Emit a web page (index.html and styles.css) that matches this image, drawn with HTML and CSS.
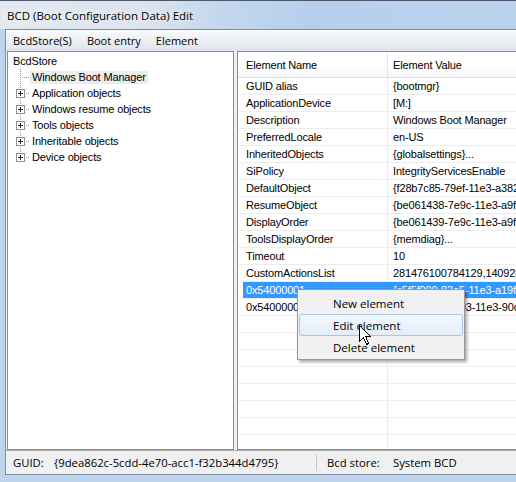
FILE: index.html
```html
<!DOCTYPE html>
<html>
<head>
<meta charset="utf-8">
<title>BCD (Boot Configuration Data) Edit</title>
<link rel="stylesheet" href="styles.css">
</head>
<body>
<div class="window">
  <div class="titlebar"><span class="title">BCD (Boot Configuration Data) Edit</span></div>
  <div class="client">
    <div class="menubar">
      <span class="menu-item">BcdStore(S)</span>
      <span class="menu-item">Boot entry</span>
      <span class="menu-item">Element</span>
    </div>
    <div class="panes">
      <div class="tree-pane">
        <div class="tree-row"><span class="label">BcdStore</span></div>
        <div class="tree-row">
          <svg class="twig" width="19" height="16" viewBox="0 0 19 16"><line class="dot" x1="9.5" y1="0" x2="9.5" y2="16"/><line class="dot" x1="11" y1="8.5" x2="19" y2="8.5"/></svg>
          <span class="label inactive-sel">Windows Boot Manager</span>
        </div>
        <div class="tree-row">
          <svg class="twig" width="19" height="16" viewBox="0 0 19 16"><line class="dot" x1="9.5" y1="0" x2="9.5" y2="16"/><line class="dot" x1="15" y1="8.5" x2="19" y2="8.5"/><rect class="box" x="5.5" y="4.5" width="8" height="8"/><path class="plus" d="M7 8.5h5M9.5 6v5"/></svg>
          <span class="label">Application objects</span>
        </div>
        <div class="tree-row">
          <svg class="twig" width="19" height="16" viewBox="0 0 19 16"><line class="dot" x1="9.5" y1="0" x2="9.5" y2="16"/><line class="dot" x1="15" y1="8.5" x2="19" y2="8.5"/><rect class="box" x="5.5" y="4.5" width="8" height="8"/><path class="plus" d="M7 8.5h5M9.5 6v5"/></svg>
          <span class="label">Windows resume objects</span>
        </div>
        <div class="tree-row">
          <svg class="twig" width="19" height="16" viewBox="0 0 19 16"><line class="dot" x1="9.5" y1="0" x2="9.5" y2="16"/><line class="dot" x1="15" y1="8.5" x2="19" y2="8.5"/><rect class="box" x="5.5" y="4.5" width="8" height="8"/><path class="plus" d="M7 8.5h5M9.5 6v5"/></svg>
          <span class="label">Tools objects</span>
        </div>
        <div class="tree-row">
          <svg class="twig" width="19" height="16" viewBox="0 0 19 16"><line class="dot" x1="9.5" y1="0" x2="9.5" y2="16"/><line class="dot" x1="15" y1="8.5" x2="19" y2="8.5"/><rect class="box" x="5.5" y="4.5" width="8" height="8"/><path class="plus" d="M7 8.5h5M9.5 6v5"/></svg>
          <span class="label">Inheritable objects</span>
        </div>
        <div class="tree-row">
          <svg class="twig" width="19" height="16" viewBox="0 0 19 16"><line class="dot" x1="9.5" y1="0" x2="9.5" y2="9"/><line class="dot" x1="15" y1="8.5" x2="19" y2="8.5"/><rect class="box" x="5.5" y="4.5" width="8" height="8"/><path class="plus" d="M7 8.5h5M9.5 6v5"/></svg>
          <span class="label">Device objects</span>
        </div>
      </div>
      <div class="list-pane">
        <div class="list-header">
          <div class="hcell c1">Element Name</div>
          <div class="hcell c2">Element Value</div>
        </div>
        <div class="list-body">
          <div class="lrow"><div class="cell c1">GUID alias</div><div class="cell c2">{bootmgr}</div></div>
          <div class="lrow"><div class="cell c1">ApplicationDevice</div><div class="cell c2">[M:]</div></div>
          <div class="lrow"><div class="cell c1">Description</div><div class="cell c2">Windows Boot Manager</div></div>
          <div class="lrow"><div class="cell c1">PreferredLocale</div><div class="cell c2">en-US</div></div>
          <div class="lrow"><div class="cell c1">InheritedObjects</div><div class="cell c2">{globalsettings}...</div></div>
          <div class="lrow"><div class="cell c1">SiPolicy</div><div class="cell c2">IntegrityServicesEnable</div></div>
          <div class="lrow"><div class="cell c1">DefaultObject</div><div class="cell c2">{f28b7c85-79ef-11e3-a382-001fd0a2b5e8}</div></div>
          <div class="lrow"><div class="cell c1">ResumeObject</div><div class="cell c2">{be061438-7e9c-11e3-a9f1-001fd0a2b5e8}</div></div>
          <div class="lrow"><div class="cell c1">DisplayOrder</div><div class="cell c2">{be061439-7e9c-11e3-a9f1-001fd0a2b5e8}</div></div>
          <div class="lrow"><div class="cell c1">ToolsDisplayOrder</div><div class="cell c2">{memdiag}...</div></div>
          <div class="lrow"><div class="cell c1">Timeout</div><div class="cell c2">10</div></div>
          <div class="lrow"><div class="cell c1">CustomActionsList</div><div class="cell c2">281476100784129,1409286211</div></div>
          <div class="lrow selected"><div class="cell c1">0x54000001</div><div class="cell c2">{c5f5f000-83e5-11e3-a19f-001fd0a2b5e8}</div></div>
          <div class="lrow"><div class="cell c1">0x54000002</div><div class="cell c2">{be06143a-7e93-11e3-90d9-001fd0a2b5e8}</div></div>
          <div class="lrow"><div class="cell c1"></div><div class="cell c2"></div></div>
          <div class="lrow"><div class="cell c1"></div><div class="cell c2"></div></div>
          <div class="lrow"><div class="cell c1"></div><div class="cell c2"></div></div>
          <div class="lrow"><div class="cell c1"></div><div class="cell c2"></div></div>
          <div class="lrow"><div class="cell c1"></div><div class="cell c2"></div></div>
          <div class="lrow"><div class="cell c1"></div><div class="cell c2"></div></div>
          <div class="lrow"><div class="cell c1"></div><div class="cell c2"></div></div>
          <div class="lrow"><div class="cell c1"></div><div class="cell c2"></div></div>
          <div class="lrow"><div class="cell c1"></div><div class="cell c2"></div></div>
        </div>
        <div class="context-menu">
          <div class="cm-item">New element</div>
          <div class="cm-item hover">Edit element</div>
          <div class="cm-item">Delete element</div>
        </div>
        <svg class="cursor" width="14" height="21" viewBox="0 0 14 21"><path d="M0.5 0.5V16.5L4.5 12.5L7.5 19.5L9.5 18.5L6.8 11.8H11.5Z" fill="#fff" stroke="#000" stroke-linejoin="miter"/></svg>
      </div>
    </div>
    <div class="statusbar">
      <div class="status-part first">
        <span class="s-label guid">GUID:</span>
        <span class="s-value">{9dea862c-5cdd-4e70-acc1-f32b344d4795}</span>
      </div>
      <div class="status-part second">
        <span class="s-label store">Bcd store:</span>
        <span class="s-value">System BCD</span>
      </div>
    </div>
  </div>
</div>
</body>
</html>
```
FILE: styles.css
```css
* { box-sizing: border-box; }
html, body { margin: 0; padding: 0; }
body {
  width: 516px;
  height: 482px;
  overflow: hidden;
  background: #bcd3ee;
}
.window {
  width: 516px;
  height: 482px;
  display: flex;
  flex-direction: column;
  border-top: 1px solid #4e5868;
  background: #bfd4ec;
  overflow: hidden;
}
.titlebar {
  height: 28px;
  flex: none;
  display: flex;
  align-items: center;
  padding-left: 7px;
  background: linear-gradient(to right, #e3e9f1 0%, #dbe4ef 28%, #c3d7ee 42%, #b6cfec 60%, #b9d2ee 100%);
}
.title {
  font: 11.5px "Open Sans", "Noto Sans", sans-serif;
  color: #000;
  text-shadow: 0 0 6px #fff, 0 0 10px rgba(255,255,255,0.9);
}
.client {
  margin-left: 5px;
  height: 446px;
  flex: none;
  border: 1px solid #7b8ca3;
  border-right: none;
  background: #f0f0f0;
  display: flex;
  flex-direction: column;
}
.menubar {
  height: 21px;
  flex: none;
  display: flex;
  align-items: center;
  gap: 15px;
  padding-left: 7px;
  background: linear-gradient(#fafbfd 0%, #eef0f5 45%, #dfe3ee 100%);
  font: 11px "Open Sans", "Noto Sans", sans-serif;
  color: #000;
}
.panes {
  height: 399px;
  flex: none;
  display: flex;
  gap: 3px;
  padding-left: 1px;
}
.tree-pane {
  width: 227px;
  flex: none;
  background: #fff;
  border: 1px solid #8a8d92;
  padding: 1px 0 0 3px;
  font: 11px "Liberation Sans", Arial, sans-serif;
  letter-spacing: -0.15px;
  color: #000;
}
.tree-row {
  height: 16px;
  display: flex;
  align-items: center;
}
.twig { flex: none; display: block; shape-rendering: crispEdges; }
.twig .dot { stroke: #9a9a9a; stroke-width: 1; stroke-dasharray: 1 1; }
.twig .box { fill: #fff; stroke: #8f8f8f; }
.twig .plus { stroke: #2b2b2b; fill: none; }
.label {
  padding: 0 2px;
  line-height: 13px;
  white-space: nowrap;
}
.label.inactive-sel { background: #ececec; }

.list-pane {
  flex: 1;
  min-width: 0;
  position: relative;
  background: #fff;
  border: 1px solid #8a8d92;
  border-right: none;
  overflow: hidden;
  font: 11px "Liberation Sans", Arial, sans-serif;
  letter-spacing: -0.15px;
  color: #000;
}
.list-header {
  display: flex;
  height: 26px;
  border-bottom: 1px solid #dadde2;
  background: linear-gradient(#ffffff 0%, #ffffff 55%, #f6f7f9 100%);
}
.hcell {
  display: flex;
  align-items: center;
  white-space: nowrap;
}
.c1 {
  width: 150px;
  flex: none;
  padding-left: 8px;
  border-right: 1px solid #e5e5e5;
}
.c2 {
  flex: 1;
  padding-left: 5px;
  white-space: nowrap;
  overflow: hidden;
}
.list-body { display: flex; flex-direction: column; }
.lrow {
  display: flex;
  height: 17px;
  flex: none;
  border-bottom: 1px solid #ededed;
}
.cell {
  line-height: 16px;
  white-space: nowrap;
  overflow: hidden;
}
.lrow .c1 { border-right-color: #ededed; }
.lrow.selected { color: #fff; }
.lrow.selected .c1 { background: linear-gradient(to right, transparent 5px, #3399ff 5px); border-right-color: #3399ff; }
.lrow.selected .c2 { background: #3399ff; }

.context-menu {
  position: absolute;
  left: 59px;
  top: 237px;
  width: 168px;
  padding: 2px 1px 1px;
  background: #f1f1f1;
  border: 1px solid #979797;
  box-shadow: 2px 2px 3px rgba(0,0,0,0.35);
  font: 11.5px "Open Sans", "Noto Sans", sans-serif;
  letter-spacing: 0;
  color: #000;
}
.cm-item {
  height: 22px;
  padding-left: 33px;
  display: flex;
  align-items: center;
  border: 1px solid transparent;
  border-radius: 3px;
}
.cm-item.hover {
  border-color: #a9c6ea;
  background: linear-gradient(#f3f8fe, #e3edf9);
}
.cursor {
  position: absolute;
  left: 121px;
  top: 273px;
  shape-rendering: crispEdges;
}

.statusbar {
  height: 24px;
  flex: none;
  border-top: 1px solid #a8a8a8;
  display: flex;
  align-items: center;
  font: 11.3px "Open Sans", "Noto Sans", sans-serif;
  color: #000;
}
.status-part {
  display: flex;
  align-items: center;
  height: 100%;
}
.status-part.first { width: 310px; padding-left: 7px; }
.status-part.second { padding-left: 10px; border-left: 1px solid #c8c8c8; height: 17px; }
.s-label { display: inline-block; }
.s-label.guid { width: 41px; }
.s-label.store { width: 66px; }
```
